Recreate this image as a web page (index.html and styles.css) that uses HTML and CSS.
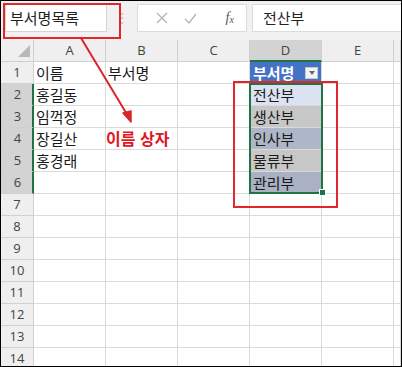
FILE: index.html
```html
<!DOCTYPE html>
<html lang="ko">
<head>
  <meta charset="UTF-8" />
  <title>이름 상자</title>
  <link rel="stylesheet" href="styles.css">
</head>
<body>
  <div class="window">
    <div class="toolbar">
      <div class="namebox">부서명목록</div>
      <div class="grip">⋮</div>
      <div class="fx-buttons">
        <svg width="12" height="12" viewBox="0 0 12 12"><path d="M1 1L11 11M11 1L1 11" stroke="#b4b4b4" stroke-width="1.3" fill="none"/></svg>
        <svg width="13" height="11" viewBox="0 0 13 11"><path d="M1 6L5 10L12 1" stroke="#b4b4b4" stroke-width="1.3" fill="none"/></svg>
        <span class="fx">f<sub>x</sub></span>
      </div>
      <div class="formula">전산부</div>
    </div>

    <div class="sheet">
      <div class="hd corner"><svg width="12" height="12" viewBox="0 0 12 12"><path d="M12 0L12 12L0 12Z" fill="#b9b9b9"/></svg></div>
      <div class="hd col">A</div>
      <div class="hd col">B</div>
      <div class="hd col">C</div>
      <div class="hd col sel">D</div>
      <div class="hd col">E</div>
      <div class="hd col"></div>

      <div class="hd row">1</div>
      <div class="cell">이름</div>
      <div class="cell">부서명</div>
      <div class="cell"></div>
      <div class="cell tbl-head"><span>부서명</span><span class="drop"></span></div>
      <div class="cell"></div>
      <div class="cell"></div>

      <div class="hd row sel">2</div>
      <div class="cell">홍길동</div>
      <div class="cell"></div>
      <div class="cell"></div>
      <div class="cell t1">전산부</div>
      <div class="cell"></div>
      <div class="cell"></div>

      <div class="hd row sel">3</div>
      <div class="cell">임꺽정</div>
      <div class="cell"></div>
      <div class="cell"></div>
      <div class="cell t2">생산부</div>
      <div class="cell"></div>
      <div class="cell"></div>

      <div class="hd row sel">4</div>
      <div class="cell">장길산</div>
      <div class="cell"></div>
      <div class="cell"></div>
      <div class="cell t3">인사부</div>
      <div class="cell"></div>
      <div class="cell"></div>

      <div class="hd row sel">5</div>
      <div class="cell">홍경래</div>
      <div class="cell"></div>
      <div class="cell"></div>
      <div class="cell t2">물류부</div>
      <div class="cell"></div>
      <div class="cell"></div>

      <div class="hd row sel">6</div>
      <div class="cell"></div>
      <div class="cell"></div>
      <div class="cell"></div>
      <div class="cell t4">관리부</div>
      <div class="cell"></div>
      <div class="cell"></div>

      <div class="hd row">7</div>
      <div class="cell"></div><div class="cell"></div><div class="cell"></div><div class="cell"></div><div class="cell"></div><div class="cell"></div>
      <div class="hd row">8</div>
      <div class="cell"></div><div class="cell"></div><div class="cell"></div><div class="cell"></div><div class="cell"></div><div class="cell"></div>
      <div class="hd row">9</div>
      <div class="cell"></div><div class="cell"></div><div class="cell"></div><div class="cell"></div><div class="cell"></div><div class="cell"></div>
      <div class="hd row">10</div>
      <div class="cell"></div><div class="cell"></div><div class="cell"></div><div class="cell"></div><div class="cell"></div><div class="cell"></div>
      <div class="hd row">11</div>
      <div class="cell"></div><div class="cell"></div><div class="cell"></div><div class="cell"></div><div class="cell"></div><div class="cell"></div>
      <div class="hd row">12</div>
      <div class="cell"></div><div class="cell"></div><div class="cell"></div><div class="cell"></div><div class="cell"></div><div class="cell"></div>
      <div class="hd row">13</div>
      <div class="cell"></div><div class="cell"></div><div class="cell"></div><div class="cell"></div><div class="cell"></div><div class="cell"></div>
      <div class="hd row">14</div>
      <div class="cell"></div><div class="cell"></div><div class="cell"></div><div class="cell"></div><div class="cell"></div><div class="cell"></div>

      <!-- selected range D2:D6 -->
      <div class="selection"></div>
      <div class="fill-handle"></div>
    </div>

    <!-- annotations -->
    <div class="mark mark-name"></div>
    <div class="mark mark-range"></div>
    <svg class="arrow" width="402" height="367" viewBox="0 0 402 367">
      <line x1="81" y1="38" x2="128" y2="116" stroke="#d9252b" stroke-width="2"/>
      <path d="M131 122L123 113L131 111Z" fill="#d9252b" stroke="#d9252b" stroke-width="1.5" stroke-linejoin="round"/>
    </svg>
    <div class="label">이름 상자</div>
  </div>
</body>
</html>
```

FILE: styles.css
```css
body {
  margin: 0;
  background: #fff;
  font-family: "Noto Sans CJK KR", "Noto Sans", sans-serif;
}

.window {
  position: relative;
  width: 402px;
  height: 367px;
  box-sizing: border-box;
  border: 1px solid #000;
  overflow: hidden;
  background: #fff;
}

/* formula bar */
.toolbar {
  display: flex;
  align-items: flex-start;
  height: 39px;
  padding: 3px 0 0 4px;
  box-sizing: border-box;
  background: #f1f1f1;
}

.namebox {
  width: 102px;
  height: 28px;
  box-sizing: border-box;
  background: #fff;
  border: 1px solid #d4d4d4;
  padding-left: 4px;
  font-size: 15px;
  line-height: 25px;
  color: #222;
}

.grip {
  width: 30px;
  text-align: center;
  color: #c0c0c0;
  font-size: 14px;
  line-height: 26px;
}

.fx-buttons {
  display: flex;
  align-items: center;
  justify-content: space-around;
  width: 110px;
  height: 28px;
  box-sizing: border-box;
  background: #fff;
  border: 1px solid #dcdcdc;
  padding: 0 4px 0 10px;
}

.fx {
  font-family: "Liberation Serif", serif;
  font-style: italic;
  font-size: 14px;
  color: #555;
  margin-left: 12px;
}

.fx sub {
  font-size: 10px;
  vertical-align: -1px;
}

.formula {
  flex: 1;
  height: 28px;
  margin-left: 5px;
  box-sizing: border-box;
  background: #fff;
  border: 1px solid #dcdcdc;
  border-right: none;
  padding-left: 10px;
  font-size: 15px;
  line-height: 25px;
  color: #222;
}

/* sheet grid */
.sheet {
  position: relative;
  display: grid;
  grid-template-columns: 33px repeat(5, 72px) 1fr;
  grid-auto-rows: 22px;
}

.sheet > div {
  box-sizing: border-box;
  border-right: 1px solid #dadada;
  border-bottom: 1px solid #dadada;
}

.hd {
  background: #efefef;
  font-family: "Open Sans", "DejaVu Sans", sans-serif;
  font-size: 13px;
  color: #444;
  text-align: center;
  line-height: 21px;
}

.sheet > .hd {
  border-color: #d0d0d0;
}

.corner {
  display: flex;
  align-items: flex-end;
  justify-content: flex-end;
  padding: 0 3px 4px 0;
}

.sheet > .col.sel {
  background: #d3d3d3;
  border-bottom: 2px solid #217346;
}

.sheet > .row.sel {
  background: #d3d3d3;
  border-right: 2px solid #217346;
  padding-left: 2px;
}

.cell {
  font-size: 15px;
  line-height: 21px;
  color: #1a1a1a;
  padding-left: 2px;
  white-space: nowrap;
}

.tbl-head {
  display: flex;
  align-items: center;
  justify-content: space-between;
  background: #4472c4;
  color: #fff;
  font-weight: bold;
  padding: 0 3px 0 3px;
}

.drop {
  position: relative;
  width: 11px;
  height: 10px;
  background: #f4f4f4;
  border: 1px solid #c8c8c8;
}

.drop::after {
  content: "";
  position: absolute;
  left: 3px;
  top: 3px;
  border-left: 3px solid transparent;
  border-right: 3px solid transparent;
  border-top: 4px solid #666;
}

.sheet > .t1 { background: #dbe2f1; padding-left: 3px; }
.sheet > .t2 { background: #c7c7c7; padding-left: 3px; }
.sheet > .t3 { background: #aeb7c7; padding-left: 3px; }
.sheet > .t4 { background: #a9b1c2; padding-left: 3px; }

.sheet > .selection {
  position: absolute;
  left: 248px;
  top: 43px;
  width: 74px;
  height: 111px;
  border: 2px solid #217346;
}

.sheet > .fill-handle {
  position: absolute;
  left: 318px;
  top: 149px;
  width: 7px;
  height: 7px;
  background: #217346;
  border: 1px solid #fff;
}

/* red annotations */
.mark {
  position: absolute;
  border: 2px solid #e2262c;
}

.mark-name {
  left: 2px;
  top: 2px;
  width: 114px;
  height: 32px;
}

.mark-range {
  left: 232px;
  top: 80px;
  width: 101px;
  height: 123px;
}

.arrow {
  position: absolute;
  left: -1px;
  top: -1px;
}

.label {
  position: absolute;
  left: 105px;
  top: 126px;
  font-size: 16px;
  font-weight: bold;
  color: #e0161f;
  line-height: 22px;
}
```
